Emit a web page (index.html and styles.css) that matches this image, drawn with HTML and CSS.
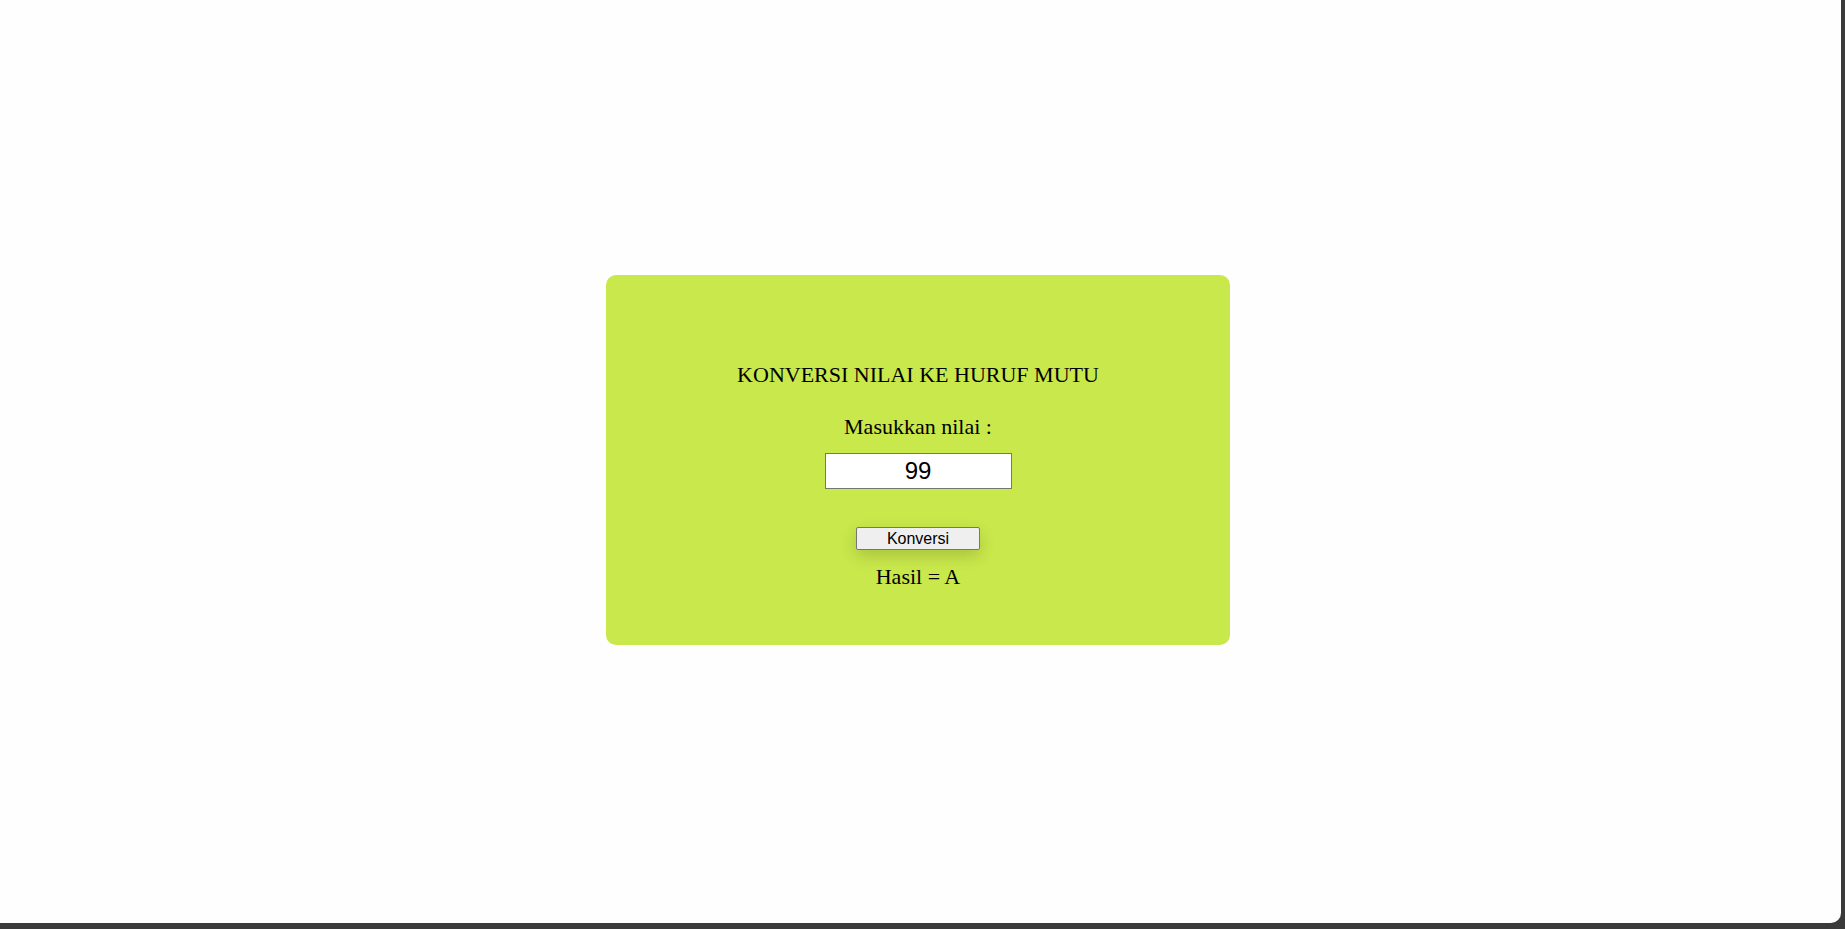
FILE: index.html
```html
<!DOCTYPE html>
<html lang="id">
<head>
<meta charset="utf-8">
<title>Konversi Nilai</title>
<link rel="stylesheet" href="styles.css">
</head>
<body>
<div class="page">
  <div class="card">
    <div class="title">KONVERSI NILAI KE HURUF MUTU</div>
    <div class="label">Masukkan nilai :</div>
    <input class="field" type="text" value="99">
    <button class="btn" type="button">Konversi</button>
    <div class="result">Hasil = A</div>
  </div>
</div>
</body>
</html>
```

FILE: styles.css
```css
html, body {
  margin: 0;
  padding: 0;
}
body {
  width: 1845px;
  height: 929px;
  background: #3a3a3a;
  overflow: hidden;
  font-family: "Liberation Serif", "Times New Roman", serif;
}
.page {
  width: 1841px;
  height: 923px;
  background: #fefefe;
  border-bottom-right-radius: 10px;
  box-sizing: border-box;
  padding-right: 5px;
  padding-bottom: 3px;
  display: flex;
  align-items: center;
  justify-content: center;
}
.card {
  width: 624px;
  height: 370px;
  box-sizing: border-box;
  background: #c9e84b;
  border-radius: 10px;
  padding-top: 87px;
  display: flex;
  flex-direction: column;
  align-items: center;
  color: #000;
}
.title,
.label,
.result {
  font-size: 22px;
  line-height: 25px;
}
.label {
  margin-top: 27px;
}
.field {
  margin-top: 14px;
  width: 187px;
  height: 36px;
  box-sizing: border-box;
  border: 1px solid #767676;
  border-radius: 0;
  background: #fff;
  padding: 0;
  font-family: "Liberation Sans", Arial, sans-serif;
  font-size: 24px;
  text-align: center;
  color: #000;
}
.btn {
  margin-top: 38px;
  width: 124px;
  height: 23px;
  box-sizing: border-box;
  border: 1px solid #767676;
  border-radius: 2px;
  background: #efefef;
  padding: 0;
  font-family: "Liberation Sans", Arial, sans-serif;
  font-size: 16px;
  color: #000;
  box-shadow: 0 6px 16px rgba(0, 0, 0, 0.16);
}
.result {
  margin-top: 14px;
}
```
